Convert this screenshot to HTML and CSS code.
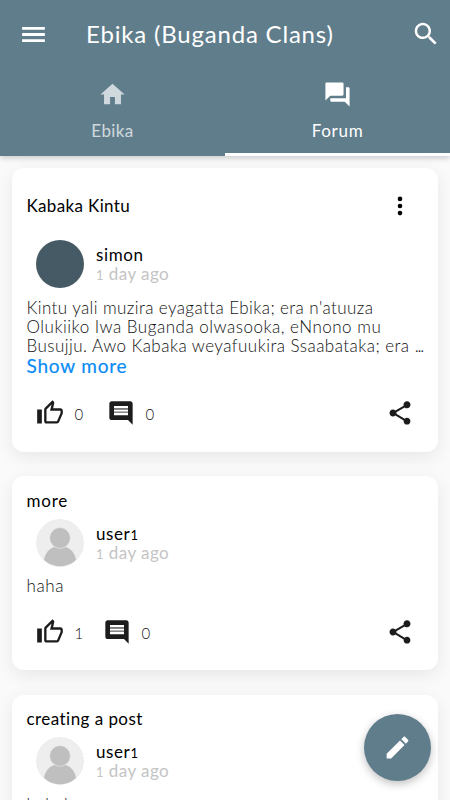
FILE: index.html
```html
<!DOCTYPE html>
<html lang="en">
<head>
<meta charset="utf-8">
<title>Ebika (Buganda Clans)</title>
<link rel="stylesheet" href="styles.css">
</head>
<body>
<svg class="defs" width="0" height="0" aria-hidden="true">
  <symbol id="thumb" viewBox="0 0 24 24"><path d="M9 21h9c.83 0 1.54-.5 1.84-1.22l3.02-7.05c.09-.23.14-.47.14-.73v-2c0-1.1-.9-2-2-2h-6.31l.95-4.57.03-.32c0-.41-.17-.79-.44-1.06L14.17 1 7.58 7.59C7.22 7.95 7 8.45 7 9v10c0 1.1.9 2 2 2zM9 9l4.34-4.34L12 10h9v2l-3 7H9V9zM1 9h4v12H1z"/></symbol>
  <symbol id="comment" viewBox="0 0 24 24"><path d="M21.99 4c0-1.1-.89-2-1.99-2H4c-1.1 0-2 .9-2 2v12c0 1.1.9 2 2 2h14l4 4-.01-18zM18 14H6v-2h12v2zm0-3H6V9h12v2zm0-3H6V6h12v2z"/><path d="M6 8h12v1H6zM6 11h12v1H6z" fill="#888"/></symbol>
  <symbol id="share" viewBox="0 0 24 24"><path d="M18 16.08c-.76 0-1.44.3-1.96.77L8.91 12.7c.05-.23.09-.46.09-.7s-.04-.47-.09-.7l7.05-4.11c.54.5 1.25.81 2.04.81 1.66 0 3-1.34 3-3s-1.34-3-3-3-3 1.34-3 3c0 .24.04.47.09.7L8.04 9.81C7.5 9.31 6.79 9 6 9c-1.66 0-3 1.34-3 3s1.34 3 3 3c.79 0 1.5-.31 2.04-.81l7.12 4.16c-.05.21-.08.43-.08.65 0 1.61 1.31 2.92 2.92 2.92s2.92-1.31 2.92-2.92-1.31-2.92-2.92-2.92z"/></symbol>
  <symbol id="person" viewBox="0 0 48 48"><circle cx="24" cy="24" r="23.7" fill="#eee" stroke="#ddd" stroke-width=".6" stroke-dasharray="2 1.5"/><path d="M8 40.7C9.500 32 16 27 24 27s14.500 5 16 13.700C36 45 30 47.200 24 47.200S12 45 8 40.700z" fill="#bfbfbf"/><circle cx="24" cy="19" r="10.400" fill="#bfbfbf" stroke="#eee" stroke-width=".6"/></symbol>
</svg>
<header class="appbar">
  <div class="toolbar">
    <svg class="icon menu" viewBox="0 0 24 24"><path d="M2.600 18.300h18.800v-2.400H2.600v2.400zm0-5.100h18.800v-2.400H2.600v2.400zm0-7.500v2.400h18.800V5.700H2.600z"/></svg>
    <h1 class="title">Ebika (Buganda Clans)</h1>
    <svg class="icon search" viewBox="0 0 24 24"><path d="M15.500 14h-.79l-.28-.27C15.410 12.590 16 11.110 16 9.500 16 5.910 13.090 3 9.500 3S3 5.910 3 9.500 5.910 16 9.500 16c1.610 0 3.090-.59 4.230-1.570l.27.28v.79l5 4.990L20.490 19l-4.990-5zm-6 0C7.010 14 5 11.990 5 9.500S7.010 5 9.500 5 14 7.010 14 9.500 11.990 14 9.500 14z"/></svg>
  </div>
  <nav class="tabs">
    <a class="tab"><svg class="icon tab-icon" viewBox="0 0 24 24"><path d="M10 20v-6h4v6h5v-8h3L12 3 2 12h3v8z"/></svg><span class="t-ebika">Ebika</span></a>
    <a class="tab active"><svg class="icon tab-icon" viewBox="0 0 24 24"><path d="M21 6h-2v9H6v2c0 .55.45 1 1 1h11l4 4V7c0-.55-.45-1-1-1zm-4 6V3c0-.55-.45-1-1-1H3c-.55 0-1 .45-1 1v14l4-4h10c.55 0 1-.45 1-1z"/></svg><span class="t-forum">Forum</span></a>
  </nav>
</header>
<main class="feed">
  <article class="card first">
    <div class="heading"><h2 class="t-kabaka">Kabaka Kintu</h2><svg class="more" viewBox="0 0 28 28"><circle cx="14" cy="6.900" r="2.300"/><circle cx="14" cy="14" r="2.300"/><circle cx="14" cy="21.100" r="2.300"/></svg></div>
    <div class="author"><div class="avatar"></div><div><div class="name t-simon">simon</div><div class="time"><small>1</small> day ago</div></div></div>
    <p class="body"><span class="l1">Kintu yali muzira eyagatta Ebika; era n'atuuza</span><span class="l2">Olukiiko Iwa Buganda olwasooka, eNnono mu</span><span class="l3">Busujju. Awo Kabaka weyafuukira Ssaabataka; era <i class="dots">...</i></span></p>
    <a class="show">Show more</a>
    <div class="actions"><svg class="act"><use href="#thumb"/></svg><span class="count">0</span><svg class="act"><use href="#comment"/></svg><span class="count">0</span><svg class="act share"><use href="#share"/></svg></div>
  </article>
  <article class="card">
    <div class="heading"><h2 class="t-more">more</h2></div>
    <div class="author"><svg class="avatar-img"><use href="#person"/></svg><div><div class="name t-user">user<small>1</small></div><div class="time"><small>1</small> day ago</div></div></div>
    <p class="body"><span class="haha">haha</span></p>
    <div class="actions"><svg class="act"><use href="#thumb"/></svg><span class="count one">1</span><svg class="act"><use href="#comment"/></svg><span class="count">0</span><svg class="act share"><use href="#share"/></svg></div>
  </article>
  <article class="card">
    <div class="heading"><h2 class="t-post">creating a post</h2></div>
    <div class="author"><svg class="avatar-img"><use href="#person"/></svg><div><div class="name t-user">user<small>1</small></div><div class="time"><small>1</small> day ago</div></div></div>
    <p class="body"><span class="haha">hahaha</span></p>
  </article>
</main>
<button class="fab" aria-label="New post"><svg class="icon pencil" viewBox="0 0 24 24"><path d="M3 17.250V21h3.750L17.810 9.940l-3.750-3.750L3 17.250zM20.710 7.040c.39-.39.39-1.020 0-1.410l-2.340-2.340c-.39-.39-1.020-.39-1.410 0l-1.830 1.830 3.750 3.750 1.830-1.830z"/></svg></button>
</body>
</html>
```

FILE: styles.css
```css
* { box-sizing: border-box; }
body { margin: 0; height: 800px; overflow: hidden; background: #fafafa; color: #111; font-family: Lato, "Open Sans", sans-serif; font-size: 17px; }
h1, h2, p { margin: 0; font-weight: 400; }
svg { display: block; flex: none; }
.defs { position: absolute; }
.icon { fill: #fff; }
.appbar { position: relative; z-index: 1; height: 156px; background: #607d8b; color: #fff; box-shadow: 0 2px 6px rgba(0,0,0,.2); }
.toolbar { height: 68px; display: flex; align-items: center; padding: 0 9px 0 19px; }
.menu { width: 29px; height: 29px; }
.title { flex: 1; margin-left: 38px; font-size: 24px; line-height: 32px; letter-spacing: .8px; white-space: nowrap; }
.search { width: 30px; height: 30px; margin-top: -1px; }
.tabs { display: flex; height: 88px; }
.tab { flex: 1; display: flex; flex-direction: column; align-items: center; padding-top: 12px; opacity: .7; border-bottom: 3px solid transparent; line-height: 24px; }
.tab.active { opacity: 1; border-bottom-color: #fff; }
.tab-icon { width: 29px; height: 29px; margin-bottom: 10px; }
.t-ebika { letter-spacing: .4px; }
.t-forum { letter-spacing: .7px; }
.feed { padding: 12px 12px 0; }
.card { height: 194px; margin-bottom: 24.500px; padding: 14.500px 14px 0 14.500px; background: #fff; border-radius: 12px; box-shadow: 0 5px 18px rgba(0,0,0,.08); white-space: nowrap; }
.card.first { height: 284px; margin-bottom: 24px; padding-top: 24px; }
.heading { display: flex; justify-content: space-between; height: 28px; }
.first .heading { height: 48px; }
h2 { color: #000; font-size: 17px; line-height: 28px; height: 28px; letter-spacing: .35px; }
.card:not(.first) h2 { line-height: 19px; }
h2.t-more { letter-spacing: .8px; }
h2.t-post { letter-spacing: .45px; }
.more { width: 28px; height: 28px; margin-right: 10.500px; }
.author { display: flex; height: 48px; padding-left: 9.500px; gap: 12px; }
.avatar, .avatar-img { width: 48px; height: 48px; border-radius: 50%; flex: none; }
.avatar { background: #455a64; }
.name, .time { line-height: 19px; height: 19px; }
.name { margin-top: 5px; color: #000; letter-spacing: .6px; }
.time { color: #c4c4c4; letter-spacing: .45px; }
small { font-size: 13px; }
.body { margin-top: 9.500px; font-weight: 300; line-height: 19.300px; }
.body span { display: block; }
.l1 { letter-spacing: .41px; }
.l2 { letter-spacing: .51px; }
.l3 { letter-spacing: .46px; }
.dots { font-style: normal; letter-spacing: -1.200px; }
.haha { letter-spacing: .6px; }
.show { display: block; color: #0a8cf5; font-size: 19px; line-height: 22px; height: 22px; letter-spacing: .8px; -webkit-text-stroke: .2px #0a8cf5; }
.actions { display: flex; align-items: center; height: 28px; padding-left: 9.500px; margin-top: 22px; }
.card:not(.first) .actions { margin-top: 22.500px; }
.act { width: 28px; height: 28px; fill: #1c1c1c; }
.count { width: 43px; padding: 2px 0 0 10.500px; font-size: 15px; line-height: 26px; font-weight: 300; }
.one { width: 39px; }
.share { margin-left: auto; margin-right: 10px; }
.fab { position: absolute; left: 364px; top: 713.500px; width: 67px; height: 67px; border: 0; border-radius: 50%; padding: 0; background: #607d8b; display: flex; align-items: center; justify-content: center; box-shadow: 0 3px 9px rgba(0,0,0,.25); }
.pencil { width: 29px; height: 29px; }
```
